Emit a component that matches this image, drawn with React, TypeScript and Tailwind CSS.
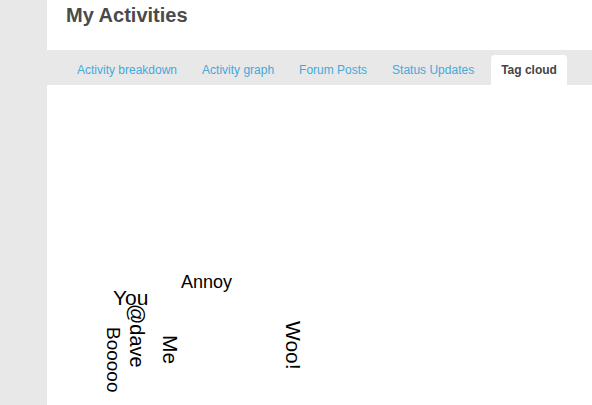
const tabs = [
  { label: "Activity breakdown" },
  { label: "Activity graph" },
  { label: "Forum Posts" },
  { label: "Status Updates" },
  { label: "Tag cloud", active: true },
];

const words = [
  { text: "Annoy", x: 134, y: 188, size: 18, rotate: false },
  { text: "You", x: 66, y: 202, size: 21, rotate: false },
  { text: "@dave", x: 100, y: 219, size: 20, rotate: true },
  { text: "Booooo", x: 76, y: 242, size: 19, rotate: true },
  { text: "Me", x: 134, y: 250, size: 21, rotate: true },
  { text: "Woo!", x: 257, y: 236, size: 21, rotate: true },
];

export default function App() {
  return (
    <div className="flex h-[405px] w-[592px] overflow-hidden bg-[#e8e8e8] font-['Liberation_Sans',Arial,sans-serif]">
      <div className="w-[47px] shrink-0 bg-[#e8e8e8]" />
      <div className="flex flex-1 flex-col bg-white">
        <div className="h-[50px] pl-[19px] pt-[5px]">
          <h1 className="text-[20px] font-bold leading-none text-[#4a4a4a]">My Activities</h1>
        </div>
        <div className="flex h-[35px] items-end gap-[5px] bg-[#e8e8e8] pl-[20px]">
          {tabs.map((t) => (
            <div
              key={t.label}
              className={
                t.active
                  ? "ml-[2px] h-[30px] rounded-t-[4px] bg-white px-[10px] text-[12px] leading-[30px] font-bold text-[#444]"
                  : "h-[30px] px-[10px] text-[12px] leading-[30px] text-[#45a9d9]"
              }
            >
              {t.label}
            </div>
          ))}
        </div>
        <div className="relative flex-1">
          {words.map((w) => (
            <span
              key={w.text}
              className={
                w.rotate
                  ? "absolute origin-top-left rotate-90 whitespace-nowrap leading-none text-black"
                  : "absolute whitespace-nowrap leading-none text-black"
              }
              style={{ left: w.x, top: w.y, fontSize: w.size }}
            >
              {w.text}
            </span>
          ))}
        </div>
      </div>
    </div>
  );
}
